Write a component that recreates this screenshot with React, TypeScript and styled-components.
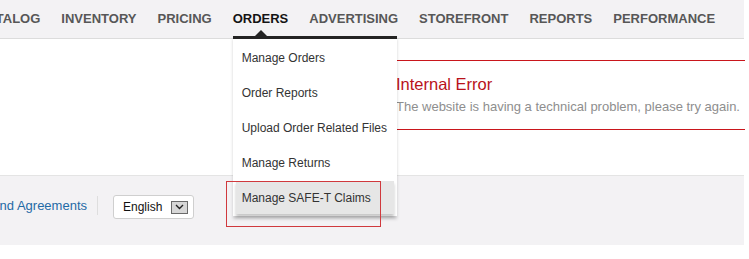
import React from 'react';
import styled, {createGlobalStyle} from 'styled-components';

const GlobalStyle = createGlobalStyle`
  html, body {
    margin: 0;
    background: #fff;
    overflow: hidden;
  }
  body {
    font-family: "Liberation Sans", Arial, sans-serif;
  }
`;

const tabs = [
  'CATALOG',
  'INVENTORY',
  'PRICING',
  'ORDERS',
  'ADVERTISING',
  'STOREFRONT',
  'REPORTS',
  'PERFORMANCE',
];

const orderLinks = [
  'Manage Orders',
  'Order Reports',
  'Upload Order Related Files',
  'Manage Returns',
  'Manage SAFE-T Claims',
];

const ChevronDown = () => (
  <svg width="9" height="6" viewBox="0 0 9 6">
    <path d="M1 1l3.5 3.5L8 1" fill="none" stroke="#222" strokeWidth="1.4" />
  </svg>
);

export default function App() {
  return (
    <>
      <GlobalStyle />
      <Styled.Page>
        <Styled.NavBar>
          <Styled.TabList>
            {tabs.map((tab) => (
              <Styled.Tab key={tab} $active={tab === 'ORDERS'}>
                {tab}
                {tab === 'ORDERS' && (
                  <Styled.Menu>
                    <Styled.Caret />
                    {orderLinks.map((link, i) => (
                      <Styled.MenuItem
                        key={link}
                        $hover={i === orderLinks.length - 1}
                      >
                        {link}
                      </Styled.MenuItem>
                    ))}
                  </Styled.Menu>
                )}
              </Styled.Tab>
            ))}
          </Styled.TabList>
        </Styled.NavBar>

        <Styled.Main>
          <Styled.ErrorBox>
            <Styled.ErrorTitle>Internal Error</Styled.ErrorTitle>
            <Styled.ErrorText>
              The website is having a technical problem, please try again.
            </Styled.ErrorText>
          </Styled.ErrorBox>
        </Styled.Main>

        <Styled.Footer>
          <Styled.LinkClip>
            <Styled.FooterLink href="#">
              Program Policies and Agreements
            </Styled.FooterLink>
          </Styled.LinkClip>
          <Styled.Divider />
          <Styled.LangSelect>
            English
            <Styled.SelectButton>
              <ChevronDown />
            </Styled.SelectButton>
          </Styled.LangSelect>
        </Styled.Footer>

        <Styled.Callout />
      </Styled.Page>
    </>
  );
}

const Styled = {
  Page: styled.div`
    position: relative;
    width: 744px;
    height: 259px;
  `,
  NavBar: styled.nav`
    height: 38px;
    background: #f3f2f4;
    border-bottom: 1px solid #dcdcdc;
  `,
  TabList: styled.ul`
    display: flex;
    gap: 21px;
    margin: 0 0 0 -22px;
    padding: 0;
    list-style: none;
    white-space: nowrap;
  `,
  Tab: styled.li<{$active?: boolean}>`
    position: relative;
    display: flex;
    align-items: center;
    height: 36px;
    padding-bottom: 2px;
    font-size: 13px;
    font-weight: bold;
    color: ${(p) => (p.$active ? '#141414' : '#575757')};
  `,
  Menu: styled.div`
    position: absolute;
    top: 36px;
    left: 0;
    z-index: 2;
    width: 164px;
    padding: 1px 0 1px;
    background: #fff;
    border-top: 3px solid #232323;
    box-shadow: 0 3px 3px rgba(0, 0, 0, 0.18);
  `,
  Caret: styled.span`
    position: absolute;
    top: -9px;
    left: 22px;
    border-left: 6px solid transparent;
    border-right: 6px solid transparent;
    border-bottom: 6px solid #232323;
  `,
  MenuItem: styled.div<{$hover?: boolean}>`
    display: flex;
    align-items: center;
    height: ${(p) => (p.$hover ? '33px' : '35px')};
    margin: ${(p) => (p.$hover ? '1px 3px 1px' : '0')};
    padding: 0 ${(p) => (p.$hover ? '6px' : '9px')};
    font-size: 12px;
    font-weight: normal;
    color: #333;
    background: ${(p) => (p.$hover ? '#e6e6e6' : 'transparent')};
    box-shadow: ${(p) => (p.$hover ? '0 3px 3px rgba(0,0,0,0.22)' : 'none')};
  `,
  Main: styled.main`
    height: 136px;
    padding-top: 21px;
    box-sizing: border-box;
  `,
  ErrorBox: styled.section`
    margin-left: 396px;
    width: 349px;
    padding: 13px 0 14px;
    border-top: 1px solid #c9161c;
    border-bottom: 1px solid #c9161c;
  `,
  ErrorTitle: styled.h4`
    margin: 0 0 5px;
    font-size: 16.5px;
    font-weight: normal;
    line-height: 20px;
    color: #b9121a;
  `,
  ErrorText: styled.p`
    margin: 0;
    font-size: 13px;
    line-height: 16px;
    color: #8e8e8e;
    white-space: nowrap;
  `,
  Footer: styled.footer`
    display: flex;
    align-items: center;
    height: 70px;
    padding-bottom: 10px;
    box-sizing: border-box;
    background: #f3f2f4;
    border-top: 1px solid #e4e4e4;
  `,
  LinkClip: styled.div`
    display: flex;
    justify-content: flex-end;
    width: 87px;
    overflow: hidden;
    white-space: nowrap;
  `,
  FooterLink: styled.a`
    font-size: 13px;
    color: #1f6aa6;
    text-decoration: none;
  `,
  Divider: styled.span`
    width: 1px;
    height: 19px;
    margin: 0 15px 0 10px;
    background: #dedede;
  `,
  LangSelect: styled.div`
    display: flex;
    align-items: center;
    justify-content: space-between;
    width: 81px;
    height: 24px;
    padding: 0 5px 0 9px;
    box-sizing: border-box;
    background: #fff;
    border: 1px solid #cfcfcf;
    border-radius: 3px;
    font-size: 12px;
    color: #111;
    margin-top: 3px;
  `,
  SelectButton: styled.span`
    display: flex;
    align-items: center;
    justify-content: center;
    width: 17px;
    height: 13px;
    box-sizing: border-box;
    background: #d7d7d7;
    border: 1px solid #6a6a6a;
  `,
  Callout: styled.div`
    position: absolute;
    left: 226px;
    top: 181px;
    width: 155px;
    height: 46px;
    box-sizing: border-box;
    border: 1px solid #d0393d;
    z-index: 3;
  `,
};
